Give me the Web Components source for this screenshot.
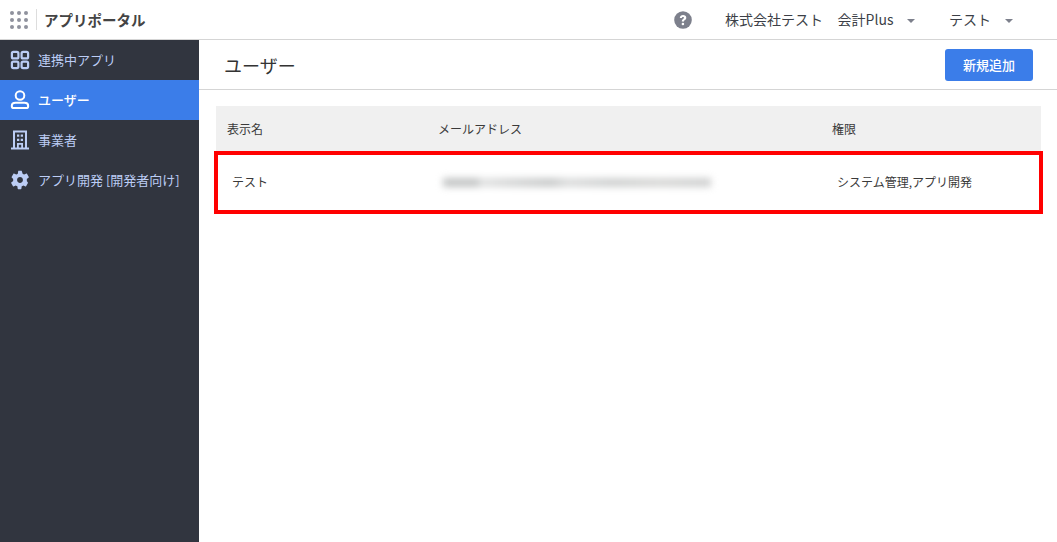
<!DOCTYPE html>
<html lang="ja">
<head>
<meta charset="utf-8">
<title>アプリポータル</title>
<style>
  html, body { margin: 0; height: 100%; }
  body { font-family: "Noto Sans CJK JP", "Noto Sans", sans-serif; color: #333; overflow: hidden; }
</style>
</head>
<body>
<app-shell>
  <app-topbar slot="top"></app-topbar>
  <app-sidenav slot="side">
    <nav-item icon="apps" label="連携中アプリ"></nav-item>
    <nav-item icon="user" label="ユーザー" active></nav-item>
    <nav-item icon="building" label="事業者"></nav-item>
    <nav-item icon="gear" label="アプリ開発 [開発者向け]"></nav-item>
  </app-sidenav>
  <user-page></user-page>
</app-shell>

<script>
const icons = {
  apps: `<svg width="20" height="20" viewBox="0 0 20 20" fill="none" stroke="currentColor" stroke-width="2.200">
    <rect x="1.900" y="1.900" width="6.500" height="6.500" rx="1.500"/><rect x="11.600" y="1.900" width="6.500" height="6.500" rx="1.500"/>
    <rect x="1.900" y="11.600" width="6.500" height="6.500" rx="1.500"/><rect x="11.600" y="11.600" width="6.500" height="6.500" rx="1.500"/></svg>`,
  user: `<svg width="20" height="20" viewBox="0 0 20 20" fill="none" stroke="currentColor" stroke-width="2">
    <circle cx="10" cy="5.500" r="4.300"/><path d="M5.500 12.800h9c2.200 0 3.700 1.400 3.700 3.100 0 1.300-.9 2.200-2.200 2.200H4c-1.300 0-2.200-.9-2.200-2.200 0-1.700 1.500-3.100 3.700-3.100z"/></svg>`,
  building: `<svg width="20" height="20" viewBox="0 0 20 20" fill="currentColor">
    <path d="M1 17.500h18V19.500H1z"/><path d="M3 .5h14v18h-2V2.500H5v16H3z"/>
    <path d="M7 4.500h2.300v2.300H7zM10.700 4.500H13v2.300h-2.300zM7 8.700h2.300V11H7zM10.700 8.700H13V11h-2.300zM7 13h6v5h-1.800v-3.200H8.800V18H7z"/></svg>`,
  gear: `<svg width="22" height="22" viewBox="0 0 24 24" fill="currentColor">
    <path d="M19.400 13c.05-.33.1-.66.1-1s-.05-.67-.1-1l2.100-1.650c.2-.15.25-.42.12-.64l-2-3.460c-.12-.22-.38-.3-.6-.22l-2.480 1c-.52-.4-1.080-.73-1.700-.98L14 2.420C13.970 2.180 13.760 2 13.500 2h-3c-.26 0-.47.18-.5.420l-.38 2.630c-.62.25-1.180.59-1.700.98l-2.480-1c-.23-.09-.48 0-.6.22l-2 3.460c-.13.22-.07.49.12.64L4.570 11c-.04.33-.07.66-.07 1s.03.67.07 1l-2.110 1.650c-.19.15-.25.42-.12.64l2 3.460c.12.22.37.3.6.22l2.480-1c.52.4 1.080.73 1.700.98l.38 2.630c.03.240.24.420.5.420h3c.26 0 .47-.18.5-.42l.38-2.630c.62-.25 1.180-.59 1.700-.98l2.480 1c.23.09.48 0 .6-.22l2-3.460c.12-.22.07-.49-.12-.64L19.400 13zM12 15.200c-1.770 0-3.200-1.430-3.200-3.200s1.430-3.200 3.200-3.200 3.200 1.430 3.200 3.200-1.430 3.200-3.200 3.200z"/></svg>`
};

class AppShell extends HTMLElement {
  constructor() {
    super();
    this.attachShadow({mode: 'open'});
    this.shadowRoot.innerHTML = `
      <style>
        :host {
          display: grid;
          grid: 40px 1fr / 199px 1fr;
          grid-template-areas: "top top" "side main";
          height: 100vh;
        }
        ::slotted([slot=top]) { grid-area: top; }
        ::slotted([slot=side]) { grid-area: side; }
        main { grid-area: main; min-width: 0; background: #fff; }
      </style>
      <slot name="top"></slot>
      <slot name="side"></slot>
      <main><slot></slot></main>
    `;
  }
}

class AppTopbar extends HTMLElement {
  constructor() {
    super();
    this.attachShadow({mode: 'open'});
    this.shadowRoot.innerHTML = `
      <style>
        :host {
          display: flex;
          align-items: center;
          box-sizing: border-box;
          height: 40px;
          border-bottom: 1px solid #d5d5d5;
          background: #fff;
          font-size: 14px;
          color: #3c3f47;
        }
        .grip { display: grid; grid: repeat(3, 4px) / repeat(3, 4px); gap: 3px; margin-left: 10px; }
        .grip i { width: 4px; height: 4px; border-radius: 50%; background: #8f929d; }
        .title {
          margin-left: 8px; padding-left: 7px; border-left: 1px solid #ddd;
          font-size: 14.500px; font-weight: 700; line-height: 21px; color: #444;
        }
        .help { margin-left: auto; display: flex; }
        .company { margin-left: 33px; padding-bottom: 1px; }
        .product { margin-left: 14.500px; padding-bottom: 1px; }
        .arrow { width: 0; height: 0; margin-top: 3px; border: 4px solid transparent; border-top: 4px solid #7d808c; border-bottom: 0; }
        .arrow.a { margin-left: 13.500px; }
        .arrow.b { margin-left: 14px; margin-right: 44px; }
        .me { margin-left: 34px; padding-bottom: 1px; }
      </style>
      <div class="grip">${'<i></i>'.repeat(9)}</div>
      <div class="title">アプリポータル</div>
      <span class="help">
        <svg width="18" height="18" viewBox="0 0 18 18"><circle cx="9" cy="9" r="8.800" fill="#7d808c"/>
          <path d="M5.800 7c.1-1.900 1.400-3 3.300-3 1.800 0 3.200 1.100 3.200 2.700 0 1.200-.7 1.800-1.500 2.400-.6.45-.8.800-.8 1.500H7.800c0-1.300.4-2 1.300-2.600.6-.45.9-.75.9-1.200 0-.5-.4-.9-1-.9-.7 0-1.100.4-1.100 1.100z" fill="#fff"/>
          <circle cx="8.900" cy="13" r="1.300" fill="#fff"/></svg>
      </span>
      <span class="company">株式会社テスト</span>
      <span class="product">会計Plus</span>
      <span class="arrow a"></span>
      <span class="me">テスト</span>
      <span class="arrow b"></span>
    `;
  }
}

class AppSidenav extends HTMLElement {
  constructor() {
    super();
    this.attachShadow({mode: 'open'});
    this.shadowRoot.innerHTML = `
      <style>
        :host { display: flex; flex-direction: column; background: #31353f; min-height: 0; }
      </style>
      <slot></slot>
    `;
  }
}

class NavItem extends HTMLElement {
  constructor() {
    super();
    this.attachShadow({mode: 'open'});
    this.shadowRoot.innerHTML = `
      <style>
        :host {
          display: flex;
          align-items: center;
          gap: 8px;
          height: 40px;
          padding-left: 10px;
          font-size: 13px;
          color: #bccdf5;
          white-space: nowrap;
        }
        :host([active]) { background: #3b7de9; color: #fff; font-weight: 500; }
        span { display: flex; width: 20px; justify-content: center; }
        :host([icon=gear]) svg { margin: 0 -1px; }
        div { padding-bottom: 2px; }
      </style>
      <span>${icons[this.getAttribute('icon')]}</span>
      <div>${this.getAttribute('label')}</div>
    `;
  }
}

class UserPage extends HTMLElement {
  constructor() {
    super();
    this.attachShadow({mode: 'open'});
    this.shadowRoot.innerHTML = `
      <style>
        :host { display: block; }
        header {
          display: flex;
          align-items: center;
          justify-content: space-between;
          box-sizing: border-box;
          height: 50px;
          padding: 0 24px 0 25px;
          border-bottom: 1px solid #d5d5d5;
        }
        h1 { margin: 0; font-size: 18px; font-weight: 400; color: #333; }
        button {
          width: 88px; height: 32px; border: 0; border-radius: 3px;
          background: #3b7de9; color: #fff;
          font: 500 13px "Noto Sans CJK JP", sans-serif;
        }
        .table { margin: 16px 16px 0 17px; font-size: 12px; color: #3a3a3a; }
        .head, .row { display: grid; align-items: center; grid-template-columns: 211px 394px 1fr; }
        .head { height: 46px; padding-left: 11px; background: #f0f0f0; }
        .head div, .row div { padding-bottom: 2px; }
        .row {
          box-sizing: border-box;
          height: 63px;
          margin: -1px -2px 0 -2px;
          padding-left: 14px;
          border: 4px solid #f00;
          grid-template-columns: 206px 399px 1fr;
        }
        .row .mask {
          box-sizing: border-box;
          width: 268px; height: 9px; padding: 0;
          margin-left: 5px;
          background: linear-gradient(90deg, #c4c6c6 0 34px, #e0e1e1 38px 44px, #d5d6d6 70px, #c8caca 108px, #dcdddd 125px, #cfd1d1 170px, #d8d8d6 215px, #d2d3d3 250px, #cfd0d0 268px);
          filter: blur(3.500px);
        }
      </style>
      <header>
        <h1>ユーザー</h1>
        <button>新規追加</button>
      </header>
      <div class="table">
        <div class="head"><div>表示名</div><div>メールアドレス</div><div>権限</div></div>
        <div class="row"><div>テスト</div><div class="mask"></div><div>システム管理,アプリ開発</div></div>
      </div>
    `;
  }
}

customElements.define('app-shell', AppShell);
customElements.define('app-topbar', AppTopbar);
customElements.define('app-sidenav', AppSidenav);
customElements.define('nav-item', NavItem);
customElements.define('user-page', UserPage);
</script>
</body>
</html>
